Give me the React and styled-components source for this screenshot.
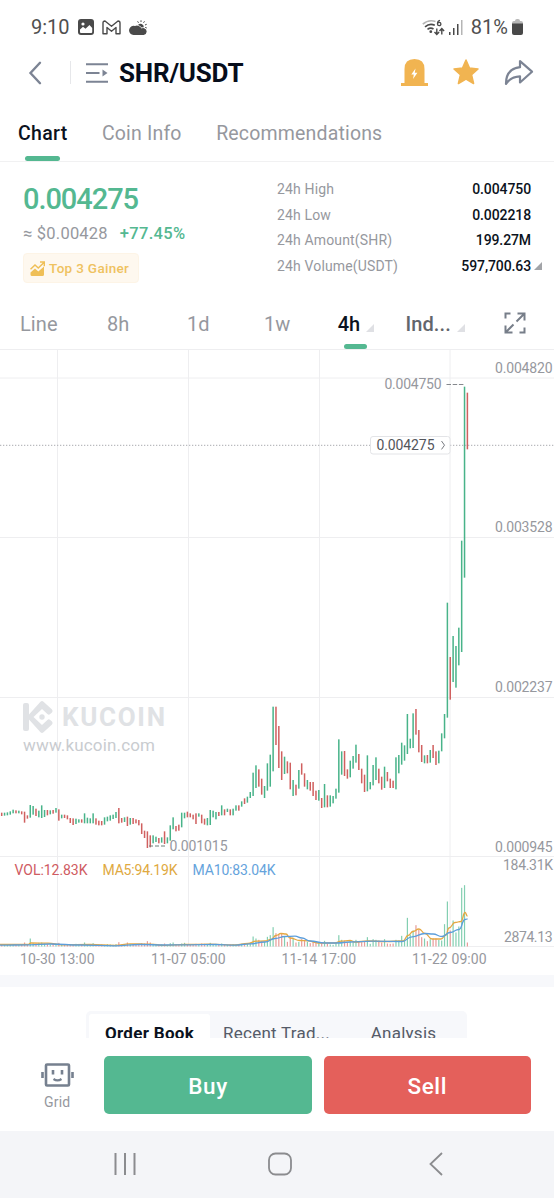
import React, { useState } from 'react';
import styled, { createGlobalStyle } from 'styled-components';

const colors = {
  up: '#54b891',
  down: '#d0605f',
  text: '#0b1220',
  grey: '#96989e',
  icon: '#7c8494',
  line: '#eeeef0',
  gold: '#f1b451',
};

const GlobalStyle = createGlobalStyle`
  * { box-sizing: border-box; }
  body {
    margin: 0;
    background: #fff;
    font-family: Roboto, "Liberation Sans", sans-serif;
  }
  button { font-family: inherit; border: 0; padding: 0; background: none; }
  svg { display: block; flex: none; }
`;

const Screen = styled.div`
  width: 554px;
  height: 1200px;
  overflow: hidden;
  display: flex;
  flex-direction: column;
  background: #fff;
`;

const StatusBar = styled.div`
  height: 48px;
  padding: 6px 31px 0 31px;
  display: flex;
  align-items: center;
  justify-content: space-between;
  font-size: 20px;
  color: #505050;
`;

const StatusGroup = styled.div`
  display: flex;
  align-items: center;
  gap: ${(p) => p.$gap}px;
`;

const Header = styled.header`
  height: 49px;
  padding: 0 20px 0 28px;
  display: flex;
  align-items: center;
`;

const Divider = styled.span`
  width: 1px;
  height: 23px;
  margin: 0 15px 0 28px;
  background: #e6e7ea;
`;

const Pair = styled.h1`
  flex: 1;
  margin: 0 0 0 11px;
  font-size: 26px;
  line-height: 30px;
  font-weight: 700;
  letter-spacing: -0.2px;
  color: #060d1b;
`;

const HeaderIcons = styled.div`
  display: flex;
  align-items: center;
  gap: 24px;
  margin-top: -1px;
`;

const Tabs = styled.nav`
  height: 65px;
  padding-left: 18px;
  display: flex;
  gap: 34.5px;
  border-bottom: 1px solid #f1f1f2;
`;

const Tab = styled.button`
  display: flex;
  flex-direction: column;
  align-items: center;
  padding-top: 25px;
  font-size: 19.5px;
  line-height: 24px;
  font-weight: ${(p) => (p.$active ? 500 : 400)};
  letter-spacing: ${(p) => (p.$active ? 0.3 : 0.17)}px;
  color: ${(p) => (p.$active ? colors.text : colors.grey)};

  &::after {
    content: '';
    width: 35px;
    height: 6px;
    margin-top: 9.5px;
    border-radius: 3px;
    background: ${(p) => (p.$active ? colors.up : 'transparent')};
  }
`;

const Ticker = styled.section`
  height: 138px;
  padding: 14px 12px 0 23px;
  display: grid;
  grid-template-columns: 254px 1fr;
`;

const Price = styled.div`
  margin-top: 5px;
  font-size: 29px;
  line-height: 36px;
  font-weight: 500;
  letter-spacing: -1.05px;
  color: ${colors.up};
`;

const PriceSub = styled.div`
  display: flex;
  gap: 12px;
  margin-top: 5px;
  font-size: 16.5px;
  line-height: 24px;
  letter-spacing: 0.22px;
  color: ${colors.grey};
`;

const Change = styled.span`
  font-weight: 500;
  letter-spacing: 0.3px;
  color: ${colors.up};
`;

const Badge = styled.div`
  display: inline-flex;
  align-items: center;
  gap: 4px;
  width: 116px;
  height: 30px;
  margin-top: 7px;
  padding-left: 6px;
  border-radius: 4px;
  background: #fef8ef;
  border: 1px solid #fdf4e6;
  font-size: 13.5px;
  font-weight: 500;
  letter-spacing: 0.32px;
  white-space: nowrap;
  color: #efc25f;
`;

const Stat = styled.div`
  display: grid;
  grid-template-columns: 1fr auto 11px;
  align-items: center;
  height: 25.7px;
  font-size: 14px;
  letter-spacing: 0.15px;
  color: ${colors.grey};

  b {
    font-weight: 500;
    letter-spacing: -0.1px;
    color: ${colors.text};
  }
`;

const Corner = styled.i`
  width: 0;
  height: 0;
  justify-self: end;
  border-left: 8px solid transparent;
  border-bottom: 8px solid ${(p) => p.$color};
`;

const Intervals = styled.div`
  height: 50px;
  padding-left: 20px;
  display: grid;
  grid-template-columns: 87px 80px 77px 73px 68.5px 98px 1fr;
  border-bottom: 1px solid ${colors.line};
`;

const Interval = styled.button`
  display: flex;
  align-items: flex-start;
  padding-top: 12px;
  font-size: 20px;
  line-height: 24px;
  letter-spacing: 0.1px;
  font-weight: ${(p) => (p.$strong ? 500 : 400)};
  color: ${(p) => (p.$active ? colors.text : p.$strong ? '#62656c' : colors.grey)};

  ${Corner} { margin: 12px 0 0 6px; }
`;

const IntervalLabel = styled.span`
  display: flex;
  flex-direction: column;
  align-items: center;
  margin-right: -1px;

  &::after {
    content: '';
    width: 23px;
    height: 5px;
    margin: 8px -6px 0 7px;
    border-radius: 3px;
    background: ${(p) => (p.$active ? colors.up : 'transparent')};
  }
`;

const TimeAxis = styled.div`
  height: 28px;
  padding: 4px 0 0 20px;
  display: grid;
  grid-template-columns: 131px 130.5px 130.5px 1fr;
  font-size: 14px;
  line-height: 17px;
  letter-spacing: 0.1px;
  color: ${colors.grey};
`;

const Band = styled.div`
  height: 12px;
  flex: none;
  background: #f7f8fb;
`;

const BookTabs = styled.div`
  height: 51px;
  flex: none;
  padding: 24px 87px 0 86px;
  overflow: hidden;
`;

const Segments = styled.div`
  height: 46px;
  padding: 3px;
  display: grid;
  grid-template-columns: 121px 133px 1fr;
  border-radius: 5px;
  background: #f7f8fb;
`;

const Segment = styled.button`
  padding-top: 7px;
  display: flex;
  justify-content: center;
  border-radius: 3px;
  font-size: 17px;
  line-height: 24px;
  font-weight: ${(p) => (p.$active ? 700 : 400)};
  letter-spacing: ${(p) => (p.$active ? 0.3 : 0.25)}px;
  color: ${(p) => (p.$active ? colors.text : '#555b68')};
  background: ${(p) => (p.$active ? '#fff' : 'transparent')};
`;

const TradeBar = styled.div`
  height: 93px;
  flex: none;
  padding: 18px 23px 17px 0;
  display: grid;
  grid-template-columns: 92.5px 208px 207.5px;
  column-gap: 11.5px;
  background: #fff;
`;

const GridBot = styled.div`
  display: flex;
  flex-direction: column;
  align-items: center;
  gap: 6px;
  padding: 7px 0 0 22px;
  font-size: 14px;
  line-height: 18px;
  letter-spacing: 0.2px;
  color: ${colors.grey};
`;

const TradeButton = styled.button`
  padding-top: 1px;
  border-radius: 5px;
  font-size: 22.5px;
  font-weight: 500;
  letter-spacing: 0.6px;
  color: #fff;
  background: ${(p) => (p.$sell ? '#e4605b' : colors.up)};
`;

const NavBar = styled.div`
  height: 67px;
  flex: none;
  padding: 0 112px 2px 113px;
  display: grid;
  grid-template-columns: 155px 161px 14px;
  align-items: center;
  background: #f4f5f8;
`;

// One row per candle: high and low in thirds of a pixel below y=690, and direction
const CANDLES = `
368 378 r|368 377 g|367 376 g|364 374 g|359 370 g|361 370 r|362 370 g|364 373 r|365 398 r|376 386 r
345 383 g|348 374 g|356 378 r|362 382 g|346 384 g|360 381 g|360 376 r|361 373 g|360 371 r|354 368 g
358 392 r|374 385 g|374 384 r|376 388 r|384 399 r|385 405 r|386 402 g|388 398 g|388 398 r|370 400 g
383 400 g|385 400 g|370 400 g|385 404 r|392 406 r|393 406 r|382 404 g|380 394 g|376 392 g|374 387 g
366 384 g|354 400 r|384 398 r|382 396 g|380 408 r|384 404 g|384 402 r|388 400 r|390 406 r|400 432 r
422 444 r|424 474 r|436 472 r|436 460 g|440 456 g|444 460 r|442 458 g|424 462 r|442 460 g|406 452 g
382 418 g|408 424 r|404 422 r|368 412 g|368 385 g|365 382 r|370 382 r|374 388 r|370 402 r|370 380 g
374 400 r|386 404 r|384 406 g|360 405 g|362 382 g|366 388 g|366 378 r|346 376 g|358 376 r|356 366 g
358 376 r|356 376 g|346 362 g|346 362 r|334 350 g|325 342 r|320 338 g|306 324 g|248 318 g|226 294 g
238 290 r|266 314 r|288 324 g|220 302 g|194 290 g|50 244 g|50 165 r|108 234 r|184 270 r|200 252 g
214 250 r|218 298 r|270 318 g|284 316 r|240 296 g|220 254 r|250 290 r|270 298 g|276 302 r|276 318 r
302 330 r|300 332 g|324 354 r|282 352 g|316 352 r|316 350 g|318 340 g|296 326 g|148 308 g|184 254 g
183 258 r|238 266 r|212 262 g|198 236 g|164 218 g|192 240 r|236 280 r|254 306 r|196 304 g|276 298 g
225 286 g|202 270 g|236 280 r|260 299 r|230 294 g|246 274 r|266 294 r|272 294 r|202 298 g|195 250 g
158 224 g|166 212 g|72 192 g|146 175 g|70 174 g|57 134 r|120 187 r|165 216 r|196 220 g|195 220 r
180 218 g|165 204 r|184 225 r|182 220 g|130 184 g|72 145 g|-262 83 g|-99 29 r|-162 -24 g|-132 -7 g
-187 -74 g|-448 -114 g|-910 -337 g|-892 -722 r`
  .trim()
  .split(/[|\n]/)
  .map((row) => {
    const [high, low, dir] = row.split(' ');
    return { high: 690 + high / 3, low: 690 + low / 3, up: dir === 'g' };
  });

const VOLUMES = [
  6, 5, 6, 7, 5, 6, 5, 7, 12, 7, 24, 10, 9, 11, 12, 9, 7, 6, 8, 7,
  11, 5, 6, 5, 7, 6, 8, 5, 6, 12, 7, 6, 10, 6, 5, 6, 5, 7, 6, 5,
  7, 13, 6, 5, 12, 7, 6, 5, 6, 10, 9, 16, 12, 8, 6, 5, 6, 9, 5, 10,
  12, 7, 6, 9, 11, 7, 6, 5, 8, 6, 9, 8, 7, 11, 7, 8, 6, 9, 7, 5,
  6, 7, 5, 6, 8, 7, 9, 11, 30, 24, 20, 16, 14, 29, 34, 58, 40, 36, 38, 30,
  14, 28, 26, 12, 14, 22, 18, 14, 10, 14, 14, 11, 13, 17, 9, 6, 5, 11, 34, 20,
  18, 12, 16, 17, 20, 14, 13, 16, 28, 8, 22, 20, 18, 12, 22, 9, 8, 9, 20, 18,
  32, 20, 86, 36, 48, 64, 50, 28, 24, 16, 22, 24, 24, 20, 18, 67, 135, 48, 78, 42,
  60, 176, 184, 12,
];

const MA5 = [
  [0, 944.5], [28, 944.5], [31, 943], [48, 943.2], [62, 944.8], [90, 944.5], [115, 945.3], [130, 943.8],
  [150, 944.2], [165, 945.3], [185, 944.5], [210, 944.2], [235, 945], [248, 943.5], [256, 941.2],
  [265, 941], [271, 939.5], [276, 935.5], [281, 933.5], [286, 934], [290, 938], [300, 940.5], [308, 940.8],
  [318, 943], [335, 943], [341, 941.2], [350, 940.5], [355, 942], [368, 941], [385, 941.5], [403, 941],
  [408, 935.5], [413, 931.5], [419, 929], [425, 933.5], [432, 939], [441, 939], [446, 935], [449, 928],
  [455, 922.5], [461, 921.5], [465, 912.5], [467.5, 916],
];

const MA10 = [
  [0, 945.2], [30, 944.8], [50, 944], [80, 945], [115, 945.8], [140, 944.5], [165, 945], [190, 944.8],
  [215, 944.5], [235, 945.2], [250, 943.8], [265, 942], [275, 938.5], [285, 936.5], [295, 936.2],
  [302, 938], [310, 941], [325, 943], [337, 943], [350, 942], [372, 941.2], [402, 941.5], [412, 936.8],
  [425, 933.5], [433, 934], [442, 936.5], [450, 932.5], [459, 929.5], [465, 919.5], [467.5, 919],
];

const STEP = 2.857;
const candleX = (i) => 1.7 + i * STEP;

// Smooth path through the points of a moving average
function smooth(points) {
  return points
    .map(([x, y], i) => {
      if (i === 0) return `M${x} ${y}`;
      const [px, py] = points[i - 1];
      const mid = (px + x) / 2;
      return `C${mid} ${py} ${mid} ${y} ${x} ${y}`;
    })
    .join(' ');
}

const ChartSvg = styled.svg`
  width: 554px;
  height: 597px;
  text { font-size: 14px; fill: ${colors.grey}; }
`;

const GridLine = styled.path`
  stroke: ${colors.line};
  stroke-width: 1;
  fill: none;
`;

const Watermark = styled.g`
  fill: #e0e2e5;
  text { fill: #e0e2e5; font-size: 26px; font-weight: 700; }
  text + text { fill: #c9ccd0; font-size: 17px; font-weight: 400; }
`;

const Average = styled.path`
  fill: none;
  stroke-width: 1.3;
  stroke: ${(p) => p.$color};
`;

const ChartText = styled.text`
  && {
    fill: ${(p) => p.$color || colors.grey};
    font-size: 14px;
  }
`;

function Chart() {
  return (
    <ChartSvg viewBox="0 350 554 597">
      <GridLine d="M0 378H554M0 537.500H554M0 697.500H554M0 856.500H554M0 946.500H554M57.500 350V947M188.500 350V947M319.500 350V947M450 350V947" />
      <Watermark>
        <path d="M23 705q0-2 2-2h2q2 0 2 2v9.500L40.500 701.700q1.500-1.300 3 0L52 709.500q1.300 1.500 0 2.900l-1.800 1.700q-1.400 1.200-2.800 0L42 709l-8.500 8 8.500 8 5.400-5.100q1.400-1.200 2.800 0l1.800 1.700q1.300 1.400 0 2.900l-8.500 7.800q-1.500 1.300-3 0L29 719.500v9.500q0 2-2 2h-2q-2 0-2-2z" />
        <circle cx="42" cy="717" r="2.700" />
        <text x="62" y="726" textLength="103">KUCOIN</text>
        <text x="23" y="751" textLength="132">www.kucoin.com</text>
      </Watermark>

      {CANDLES.map((c, i) => (
        <rect
          key={i}
          x={candleX(i) - 0.75}
          y={c.high}
          width="1.5"
          height={c.low - c.high}
          fill={c.up ? '#48b389' : colors.down}
        />
      ))}

      {VOLUMES.map((v, i) => (
        <rect
          key={i}
          x={candleX(i) - 0.6}
          y={946.5 - v / 3}
          width="1.2"
          height={v / 3}
          fill={CANDLES[i].up ? '#83cfb1' : '#e79b98'}
        />
      ))}
      <Average $color="#e5a843" d={smooth(MA5)} />
      <Average $color="#5c9edb" d={smooth(MA10)} />

      <path d="M0 445.300H554" stroke="#a9abb0" strokeWidth="1" strokeDasharray="1.3 1.7" />
      <rect x="370.500" y="436.500" width="79.500" height="17.500" rx="2.500" fill="#fff" stroke="#e3e4e7" />
      <ChartText $color="#53565c" x="376.500" y="450" textLength="58">0.004275</ChartText>
      <path d="M441.500 441l3 4.200-3 4.200" fill="none" stroke="#777a80" />

      <path d="M446.500 384.500h17" stroke="#85888d" strokeDasharray="4.500 1.700" />
      <ChartText x="384.500" y="389" textLength="57">0.004750</ChartText>
      <path d="M149 846h17" stroke="#6f7f78" strokeDasharray="4 2" />
      <ChartText x="169.500" y="850.500" textLength="58">0.001015</ChartText>

      <ChartText x="495" y="372.500" textLength="57.500">0.004820</ChartText>
      <ChartText x="495" y="532" textLength="57.500">0.003528</ChartText>
      <ChartText x="495" y="692" textLength="57.500">0.002237</ChartText>
      <ChartText x="495" y="851.500" textLength="57.500">0.000945</ChartText>
      <ChartText x="503" y="870" textLength="50">184.31K</ChartText>
      <ChartText x="504" y="941.500" textLength="48.500">2874.13</ChartText>

      <ChartText $color="#cf5b62" x="14.500" y="874.500" textLength="73">VOL:12.83K</ChartText>
      <ChartText $color="#e0a941" x="102.500" y="874.500" textLength="75">MA5:94.19K</ChartText>
      <ChartText $color="#65a3dc" x="192.500" y="874.500" textLength="83">MA10:83.04K</ChartText>
    </ChartSvg>
  );
}

const PictureIcon = () => (
  <svg width="16" height="16" viewBox="0 0 16 16">
    <rect width="16" height="16" rx="3" fill="#4a4a4a" />
    <circle cx="5" cy="5" r="1.600" fill="#fff" />
    <path d="M2 13V10.500l3-2.700 2.500 2 4-3.800 2.700 3V13q0 1-1 1H3q-1 0-1-1z" fill="#fff" />
  </svg>
);

const MailIcon = () => (
  <svg width="19" height="15" viewBox="0 0 19 15" fill="none" stroke="#4a4a4a" strokeWidth="1.400">
    <path d="M1 13.800V3Q1 1 3 1l6.500 5.200L16 1q2 0 2 2v10.800h-4V7.500l-4.500 3.700L5 7.500v6.300z" strokeLinejoin="round" />
  </svg>
);

const WeatherIcon = () => (
  <svg width="18" height="15" viewBox="0 0 18 15" fill="#4a4a4a">
    <path d="M4.800 15a4.600 4.600 0 1 1 1.200-9 5 5 0 0 1 6.500 2.500q1.200-1 2.700-.3a3.500 3.500 0 0 1-.5 6.800z" />
    <path d="M9 5a3.300 3.300 0 0 1 5.800 2.300q-1.200-.3-2.200.3Q11.300 5.500 9 5z" />
    <path d="M9.500 2.800L8.600 1.300M12 2V.300M14.500 2.800l1-1.500M16 5l1.700-.700M16.200 7.400l1.600.6" stroke="#4a4a4a" />
  </svg>
);

const WifiIcon = () => (
  <svg width="23" height="17" viewBox="0 0 23 17" fill="none" stroke="#4a4a4a" strokeWidth="1.600">
    <path d="M.8 5.200Q6.500.2 13.500 2.500" stroke="#b5b5b5" />
    <path d="M3 7.800Q7.800 3.800 12.800 6.300M5.500 10.300Q8.600 8 11.500 10" />
    <circle cx="8.800" cy="12.700" r="1.400" fill="#4a4a4a" stroke="none" />
    <path d="M18 1.300q-2.500.5-2.500 3.200" strokeWidth="1.300" />
    <circle cx="17.200" cy="5" r="1.700" strokeWidth="1.300" />
    <path d="M14.800 9.500v5.700M12.500 13l2.300 2.500 2.300-2.500M19.800 15.500V10M17.500 12l2.300-2.500 2.300 2.500" strokeWidth="1.400" />
  </svg>
);

const SignalIcon = () => (
  <svg width="14" height="15" viewBox="0 0 14 15" fill="#4a4a4a">
    <rect y="12" width="1.500" height="3" />
    <rect x="4" y="8" width="1.500" height="7" />
    <rect x="8" y="4" width="1.500" height="11" />
    <rect x="12" width="1.500" height="15" fill="#b5b5b5" />
  </svg>
);

const BatteryIcon = () => (
  <svg width="11" height="16" viewBox="0 0 11 16">
    <path d="M0 5V4q0-2 2-2h1Q3 0 5 0h1q2 0 2 2h1q2 0 2 2v1z" fill="#b8b8b8" />
    <path d="M0 4.500h11V14q0 2-2 2H2q-2 0-2-2z" fill="#484848" />
  </svg>
);

const BackIcon = () => (
  <svg width="14" height="24" viewBox="0 0 14 24">
    <path d="M12 1.800L2.500 12l9.500 10.200" fill="none" stroke={colors.icon} strokeWidth="2.400" strokeLinecap="round" />
  </svg>
);

const ListIcon = () => (
  <svg width="22" height="20" viewBox="0 0 22 20">
    <path d="M0 1.300h22M0 10h13.500M0 18.700h22" stroke={colors.icon} strokeWidth="2" />
    <path d="M16.500 6.500l5 3.500-5 3.500z" fill={colors.icon} />
  </svg>
);

const AlarmIcon = () => (
  <svg width="27" height="27" viewBox="0 0 27 27">
    <path d="M3.500 24V10q0-10 10-10t10 10v14H27v3H0v-3z" fill={colors.gold} />
    <path d="M14.500 9.500l-4.200 6h2.500l-.7 4.500 4.300-6.200h-2.600z" fill="#fff" />
  </svg>
);

const StarIcon = () => (
  <svg width="28" height="28" viewBox="0 0 28 28">
    <path
      d="M14 2l3.500 8 8.500.9-6.400 5.900 2 8.700L14 21l-7.600 4.500 2-8.700L2 10.900l8.500-.9z"
      fill={colors.gold}
      stroke={colors.gold}
      strokeLinejoin="round"
      strokeWidth="1.500"
    />
  </svg>
);

const ShareIcon = () => (
  <svg width="30" height="27" viewBox="0 0 30 27">
    <path
      d="M16 2.200v6Q1.800 10 2 25q4.500-7.300 14-7.700v6.200L28 12.700z"
      fill="none"
      stroke={colors.icon}
      strokeWidth="2.200"
      strokeLinejoin="round"
    />
  </svg>
);

const GainIcon = () => (
  <svg width="15" height="15" viewBox="0 0 15 15">
    <path d="M.5 8.300L5 4l3.300 3L14 1.500M10 1h4.300v4.300" fill="none" stroke="#efbf57" strokeWidth="1.500" />
    <path d="M.5 11.500L5 7.500l3.300 3L14 5.500v8q0 1.500-1.500 1.500H2Q.5 15 .5 13.500z" fill="#efbf57" />
  </svg>
);

const ExpandIcon = () => (
  <svg width="22" height="22" viewBox="0 0 22 22" fill="none" stroke="#777e89" strokeWidth="2">
    <path d="M1.500 6.500v-5h5M20.500 15.500v5h-5M13.500 1.500h7v7M20 2l-7.500 7.500M8.500 20.500h-7v-7M2 20l7.500-7.500" />
  </svg>
);

const BotIcon = () => (
  <svg width="33" height="24" viewBox="0 0 33 24" fill="none" stroke="#76808f">
    <rect x="5" y="1.500" width="23" height="21" rx="1" strokeWidth="2.600" />
    <path d="M1.500 9v6M31.500 9v6" strokeWidth="2.600" />
    <path d="M12 7v4.500M21 7v4.500" strokeWidth="2.600" />
    <path d="M12.500 16q4 2.800 8 0" strokeWidth="2.200" />
  </svg>
);

const STATS = [
  ['24h High', '0.004750'],
  ['24h Low', '0.002218'],
  ['24h Amount(SHR)', '199.27M'],
  ['24h Volume(USDT)', '597,700.63'],
];

function App() {
  const [tab, setTab] = useState('Chart');
  const [interval, setInterval] = useState('4h');
  const [book, setBook] = useState('Order Book');

  return (
    <Screen>
      <GlobalStyle />
      <StatusBar>
        <StatusGroup $gap={8}>
          <span>9:10</span>
          <PictureIcon />
          <MailIcon />
          <WeatherIcon />
        </StatusGroup>
        <StatusGroup $gap={4}>
          <WifiIcon />
          <SignalIcon />
          <span>&thinsp;81%</span>
          <BatteryIcon />
        </StatusGroup>
      </StatusBar>

      <Header>
        <BackIcon />
        <Divider />
        <ListIcon />
        <Pair>SHR/USDT</Pair>
        <HeaderIcons>
          <AlarmIcon />
          <StarIcon />
          <ShareIcon />
        </HeaderIcons>
      </Header>

      <Tabs>
        {['Chart', 'Coin Info', 'Recommendations'].map((name) => (
          <Tab key={name} $active={tab === name} onClick={() => setTab(name)}>{name}</Tab>
        ))}
      </Tabs>

      <Ticker>
        <div>
          <Price>0.004275</Price>
          <PriceSub>
            <span>≈ $0.00428</span>
            <Change>+77.45%</Change>
          </PriceSub>
          <Badge><GainIcon />Top 3 Gainer</Badge>
        </div>
        <div>
          {STATS.map(([label, value], i) => (
            <Stat key={label}>
              <span>{label}</span>
              <b>{value}</b>
              {i === STATS.length - 1 && <Corner $color="#a2a4a8" />}
            </Stat>
          ))}
        </div>
      </Ticker>

      <Intervals>
        {['Line', '8h', '1d', '1w'].map((name) => (
          <Interval key={name} $strong={interval === name} $active={interval === name} onClick={() => setInterval(name)}>
            {name}
          </Interval>
        ))}
        <Interval $strong $active={interval === '4h'} onClick={() => setInterval('4h')}>
          <IntervalLabel $active={interval === '4h'}>4h</IntervalLabel>
          <Corner $color="#dfe0e4" />
        </Interval>
        <Interval $strong>Ind...<Corner $color="#dfe0e4" /></Interval>
        <Interval><ExpandIcon /></Interval>
      </Intervals>

      <Chart />

      <TimeAxis>
        <span>10-30 13:00</span>
        <span>11-07 05:00</span>
        <span>11-14 17:00</span>
        <span>11-22 09:00</span>
      </TimeAxis>

      <Band />

      <BookTabs>
        <Segments>
          {['Order Book', 'Recent Trad...', 'Analysis'].map((name) => (
            <Segment key={name} $active={book === name} onClick={() => setBook(name)}>{name}</Segment>
          ))}
        </Segments>
      </BookTabs>

      <TradeBar>
        <GridBot><BotIcon />Grid</GridBot>
        <TradeButton>Buy</TradeButton>
        <TradeButton $sell>Sell</TradeButton>
      </TradeBar>

      <NavBar>
        <svg width="24" height="24" viewBox="0 0 24 24">
          <path d="M2.500 1v22M12 1v22M21.500 1v22" stroke="#8b8c8f" strokeWidth="2" />
        </svg>
        <svg width="24" height="24" viewBox="0 0 24 24">
          <rect x="1" y="1.500" width="22" height="21" rx="6.500" fill="none" stroke="#8b8c8f" strokeWidth="1.800" />
        </svg>
        <svg width="14" height="24" viewBox="0 0 14 24">
          <path d="M13 1L1.500 12 13 23" fill="none" stroke="#8b8c8f" strokeWidth="1.800" />
        </svg>
      </NavBar>
    </Screen>
  );
}

export default App;
